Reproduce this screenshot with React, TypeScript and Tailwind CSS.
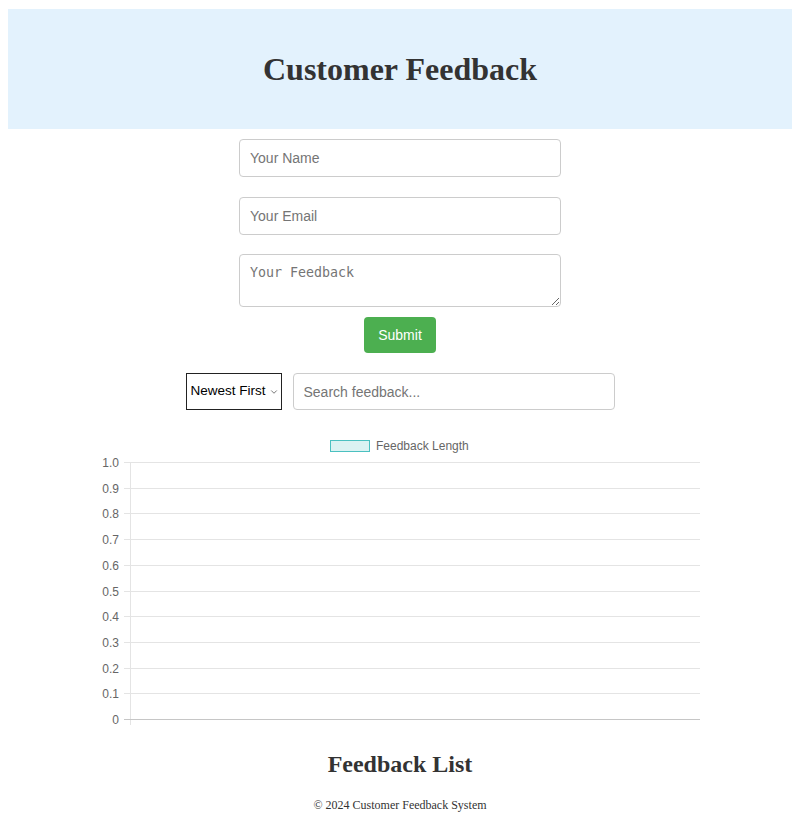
import { ChevronDown } from 'lucide-react';

const ticks = [1.0, 0.9, 0.8, 0.7, 0.6, 0.5, 0.4, 0.3, 0.2, 0.1, 0];

function FeedbackChart() {
  // plot area: top 32, bottom 289, left axis 30, right 600
  const top = 32;
  const bottom = 289;
  const yFor = (v: number) => bottom - v * (bottom - top);

  return (
    <svg width="600" height="300" viewBox="0 0 600 300" className="block">
      {/* legend */}
      <rect x="230.5" y="10.5" width="39" height="11" fill="rgba(75,192,192,0.2)" stroke="rgb(75,192,192)" strokeWidth="1" />
      <text x="276" y="20" fontSize="12" fill="#666" fontFamily="'Liberation Sans', Arial, sans-serif">
        Feedback Length
      </text>

      {/* grid */}
      {ticks.map((t) => {
        const y = Math.round(yFor(t)) + 0.5;
        return (
          <g key={t}>
            <line x1="24" x2="600" y1={y} y2={y} stroke={t === 0 ? '#c6c6c6' : '#e4e4e4'} strokeWidth="1" />
            <text
              x="19"
              y={y + 4}
              fontSize="12"
              textAnchor="end"
              fill="#666"
              fontFamily="'Liberation Sans', Arial, sans-serif"
            >
              {t === 0 ? '0' : t.toFixed(1)}
            </text>
          </g>
        );
      })}
      <line x1="30.5" x2="30.5" y1={top} y2={bottom + 6} stroke="#e4e4e4" strokeWidth="1" />
      <line x1="30" x2="600" y1={bottom + 0.5} y2={bottom + 0.5} stroke="#c6c6c6" strokeWidth="1" />
    </svg>
  );
}

export default function App() {
  return (
    <div className="min-h-[822px] bg-white px-2 pt-[9px] font-['Liberation_Serif',serif] text-[#333]">
      {/* Header */}
      <header className="flex h-[120px] items-center justify-center bg-[#e3f2fd]">
        <h1 className="text-[32px] font-bold leading-none">Customer Feedback</h1>
      </header>

      {/* Form */}
      <form className="mt-[10px] flex flex-col items-center">
        <input
          type="text"
          placeholder="Your Name"
          className="mb-5 h-[38px] w-[322px] rounded-[4px] border border-[#ccc] px-[10px] font-['Liberation_Sans',Arial,sans-serif] text-[14px] text-black placeholder:text-[#757575]"
        />
        <input
          type="email"
          placeholder="Your Email"
          className="mb-[19px] h-[38px] w-[322px] rounded-[4px] border border-[#ccc] px-[10px] font-['Liberation_Sans',Arial,sans-serif] text-[14px] text-black placeholder:text-[#757575]"
        />
        <textarea
          placeholder="Your Feedback"
          className="h-[53px] w-[322px] rounded-[4px] border border-[#ccc] px-[10px] py-[10px] font-['DejaVu_Sans_Mono',monospace] text-[13.3px] leading-[15px] text-black placeholder:text-[#757575]"
        />
        <button
          type="button"
          className="mt-[10px] h-[36px] w-[72px] rounded-[4px] bg-[#4caf50] font-['Liberation_Sans',Arial,sans-serif] text-[14px] text-white"
        >
          Submit
        </button>
      </form>

      {/* Controls */}
      <div className="mt-5 flex items-center justify-center gap-[11px]">
        <div className="relative">
          <select className="h-[37px] w-[96px] appearance-none border border-[#222] bg-white pl-[4px] pr-[14px] font-['Liberation_Sans',Arial,sans-serif] text-[13.5px] text-black">
            <option>Newest First</option>
            <option>Oldest First</option>
          </select>
          <ChevronDown
            size={10}
            strokeWidth={1.6}
            className="pointer-events-none absolute right-[3px] top-[14px] text-[#333]"
          />
        </div>
        <input
          type="text"
          placeholder="Search feedback..."
          className="h-[37px] w-[322px] rounded-[4px] border border-[#ccc] px-[10px] font-['Liberation_Sans',Arial,sans-serif] text-[14px] text-black placeholder:text-[#757575]"
        />
      </div>

      {/* Chart */}
      <div className="mt-5 flex justify-center">
        <FeedbackChart />
      </div>

      {/* List */}
      <h2 className="mt-[20px] text-center text-[24px] font-bold leading-[28px]">Feedback List</h2>

      <footer className="mt-[19px] pb-4 text-center text-[12px] leading-[16px]">
        © 2024 Customer Feedback System
      </footer>
    </div>
  );
}
